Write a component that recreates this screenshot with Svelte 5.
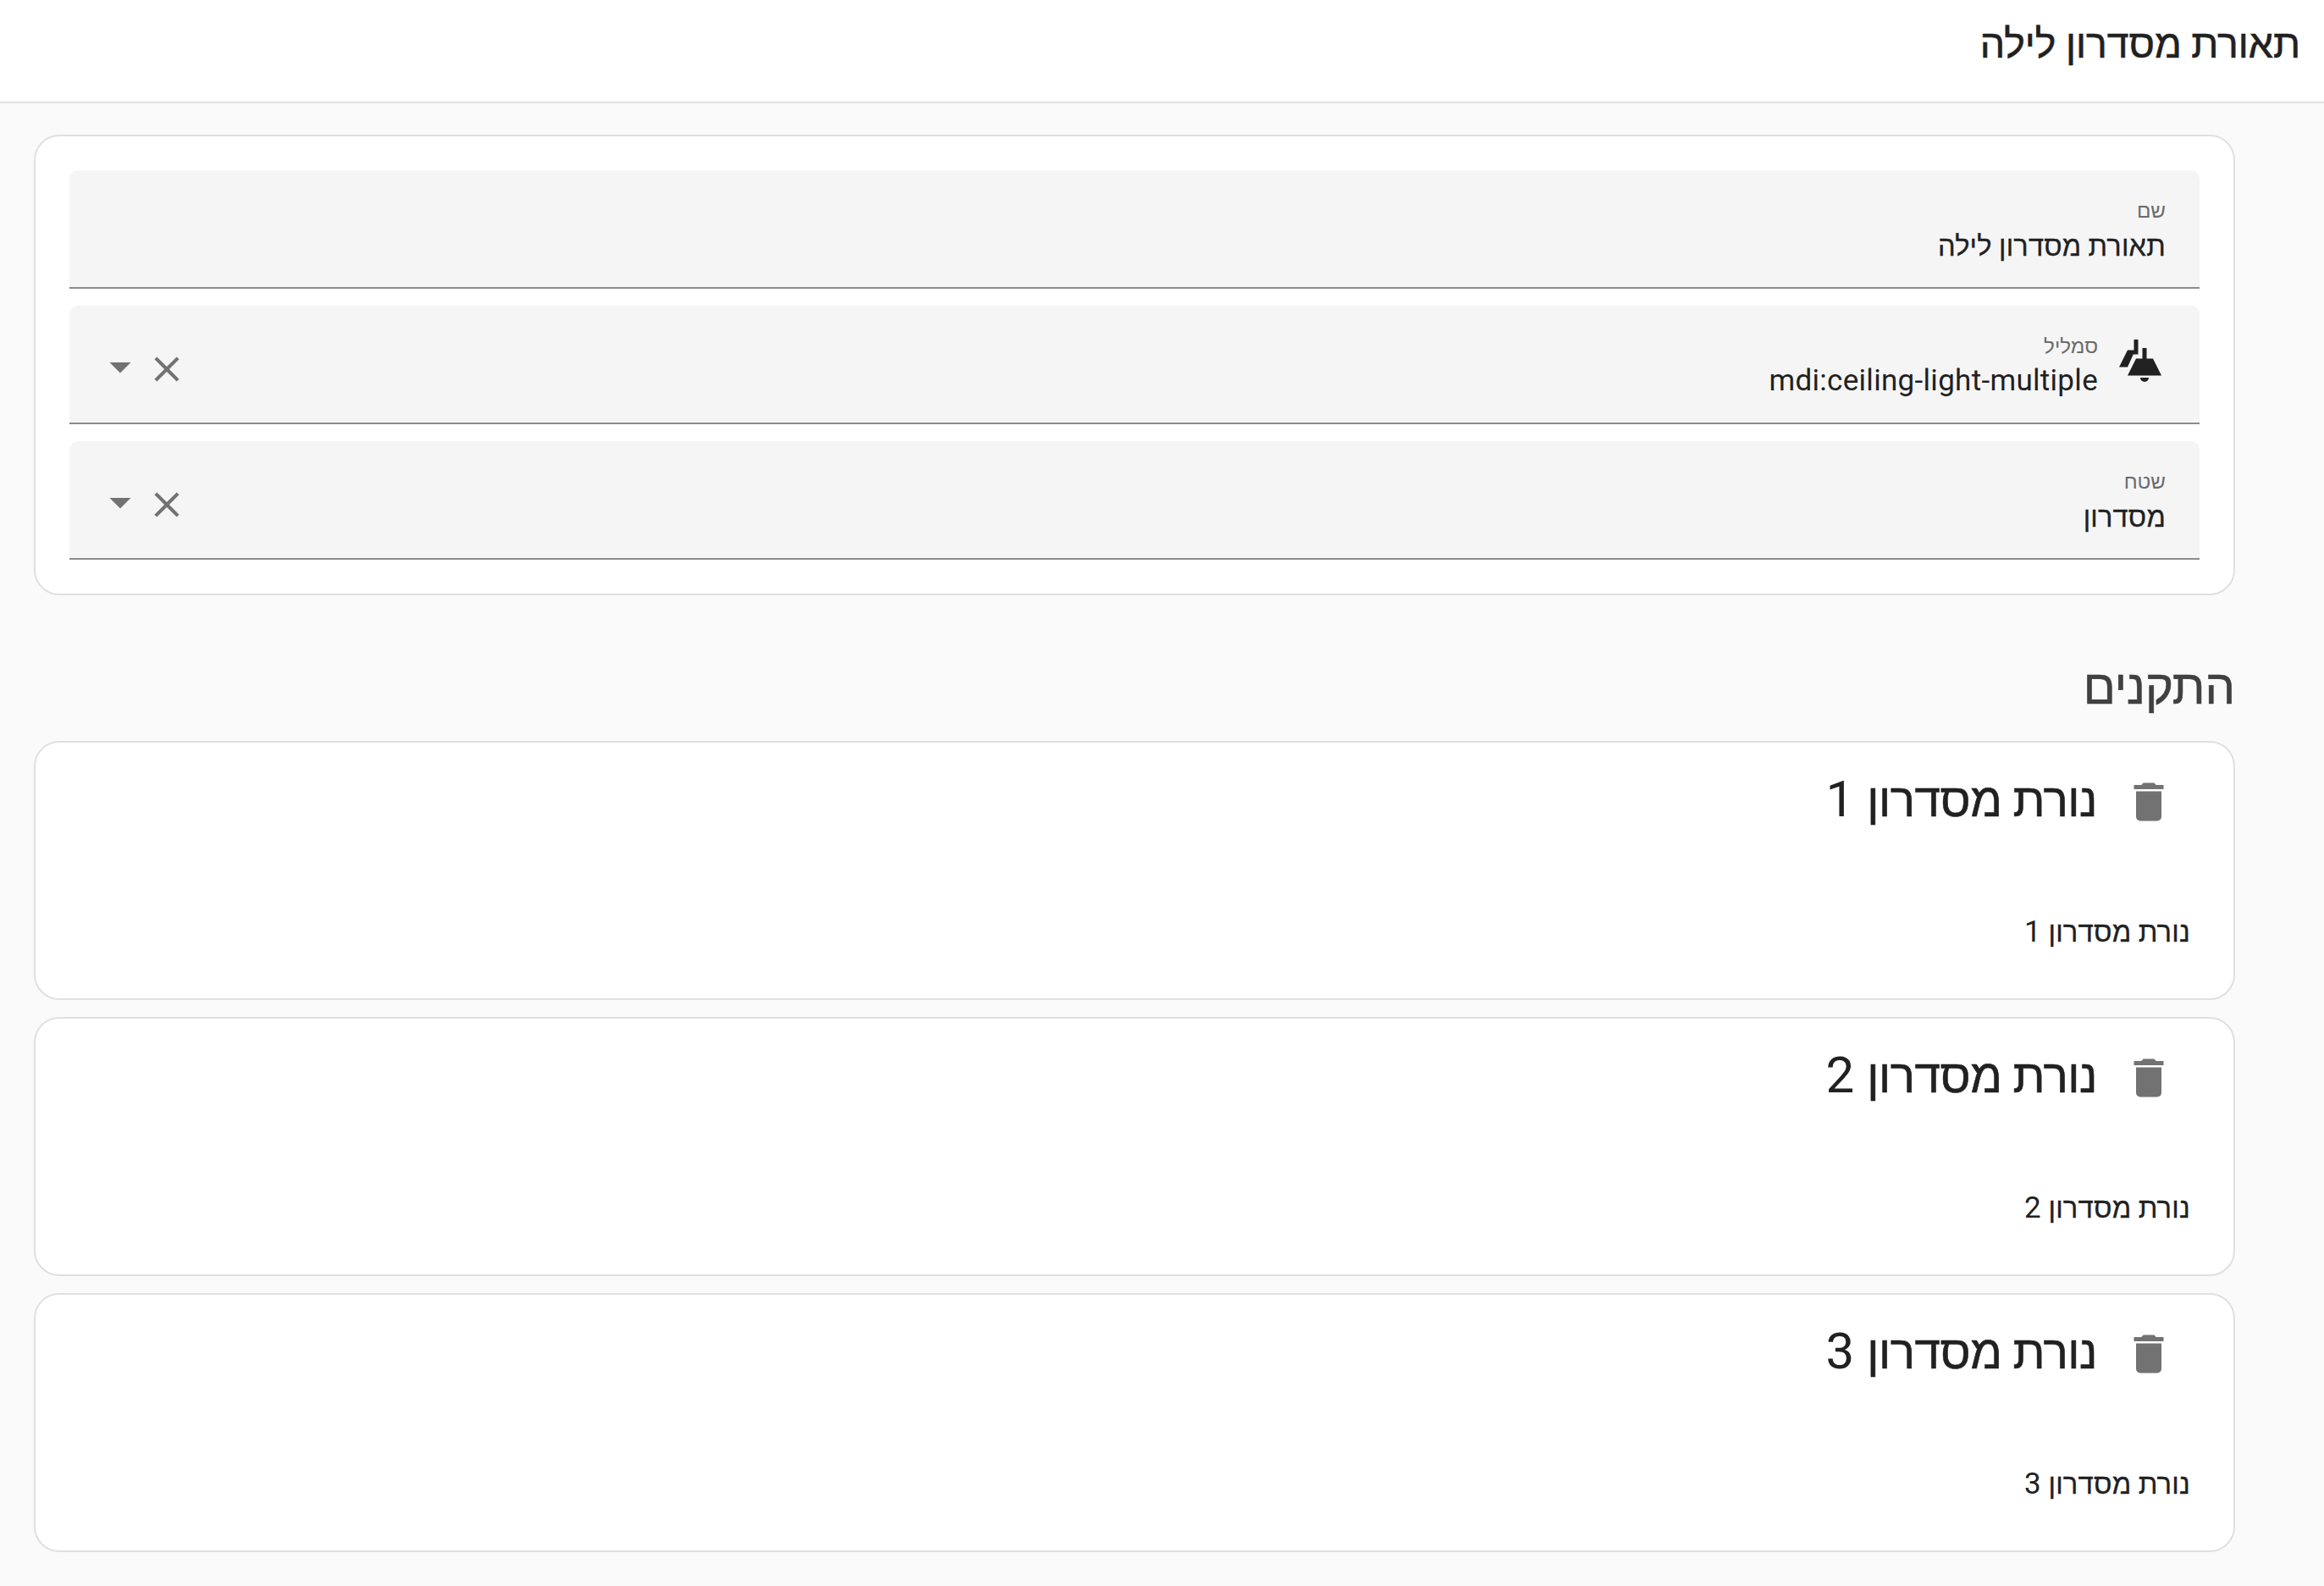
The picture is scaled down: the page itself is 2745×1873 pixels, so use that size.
<script>
    let title = $state('תאורת מסדרון לילה')
    let fields = $state([
        { label: 'שם', value: 'תאורת מסדרון לילה' },
        { label: 'סמליל', value: 'mdi:ceiling-light-multiple', icon: true, clearable: true },
        { label: 'שטח', value: 'מסדרון', clearable: true }
    ])
    let devices = $state([
        { id: 1, name: 'נורת מסדרון' },
        { id: 2, name: 'נורת מסדרון' },
        { id: 3, name: 'נורת מסדרון' }
    ])

    function clearField(field) {
        field.value = ''
    }

    function removeDevice(id) {
        devices = devices.filter(device => device.id !== id)
    }
</script>

<div class="page" dir="rtl">
    <header class="toolbar">
        <h1>{title}</h1>
    </header>

    <main class="content">
        <section class="card form">
            {#each fields as field}
                <div class="field">
                    {#if field.icon}
                        <svg class="lead" viewBox="0 0 24 24">
                            <path d="M9 2V7H6L2 15H6L8.7 9H11V2Z" />
                            <path d="M13 6V11H10L6 19H22L18 11H15V6ZM12 20A2 2 0 0 0 16 20Z" />
                        </svg>
                    {/if}
                    <div class="texts">
                        <span class="label">{field.label}</span>
                        <span class="value" class:latin={field.icon}><bdi>{field.value}</bdi></span>
                    </div>
                    {#if field.clearable}
                        <div class="actions">
                            <button type="button" aria-label="ניקוי" onclick={() => clearField(field)}>
                                <svg class="close" viewBox="0 0 24 24">
                                    <path d="M19,6.41L17.59,5L12,10.59L6.41,5L5,6.41L10.59,12L5,17.59L6.41,19L12,13.41L17.59,19L19,17.59L13.41,12L19,6.41Z" />
                                </svg>
                            </button>
                            <svg class="arrow" viewBox="0 0 24 24">
                                <path d="M7,10L12,15L17,10H7Z" />
                            </svg>
                        </div>
                    {/if}
                </div>
            {/each}
        </section>

        <h2>התקנים</h2>

        <div class="devices">
            {#each devices as device (device.id)}
                <section class="card device">
                    <div class="device-header">
                        <button type="button" aria-label="מחיקה" onclick={() => removeDevice(device.id)}>
                            <svg class="trash" viewBox="0 0 24 24">
                                <path d="M19,4H15.5L14.5,3H9.5L8.5,4H5V6H19M6,19A2,2 0 0,0 8,21H16A2,2 0 0,0 18,19V7H6V19Z" />
                            </svg>
                        </button>
                        <h3><span class="name">{device.name}</span> {device.id}</h3>
                    </div>
                    <p><span class="name">{device.name}</span> {device.id}</p>
                </section>
            {/each}
        </div>
    </main>
</div>

<style>
    :global(body) {
        margin: 0;
        background: #fafafa;
    }

    .page {
        min-height: 1873px;
        box-sizing: border-box;
        background: #fafafa;
        color: #212121;
        font-family: Roboto, "Liberation Sans", sans-serif;
    }

    h1,
    h2,
    h3,
    p {
        margin: 0;
        font-weight: 400;
        white-space: nowrap;
    }

    .toolbar {
        height: 98px;
        padding: 22px 28px 0 0;
        background: #fff;
        border-bottom: 2px solid #e0e0e0;
    }

    h1 {
        font-size: 46.4px;
        line-height: 60px;
        -webkit-text-stroke: 0.6px currentColor;
    }

    .content {
        padding: 37px 105px 0 40px;
    }

    .card {
        background: #fff;
        border: 2px solid #e0e0e0;
        border-radius: 30px;
        box-sizing: border-box;
    }

    .form {
        display: flex;
        flex-direction: column;
        gap: 20px;
        padding: 40px;
    }

    .field {
        display: flex;
        height: 140px;
        padding: 0 40px 0 30px;
        box-sizing: border-box;
        background: #f5f5f5;
        border-bottom: 2px solid #8c8c8c;
        border-radius: 10px 10px 0 0;
    }

    svg {
        display: block;
        flex: none;
        width: 60px;
        height: 60px;
        fill: #727272;
    }

    .lead {
        margin: 35px 0 0 20px;
        fill: #212121;
    }

    .texts {
        display: flex;
        flex-direction: column;
        flex: 1;
        padding-top: 32px;
    }

    .label {
        font-size: 24.2px;
        line-height: 32px;
        color: #6b6b6b;
    }

    .value {
        margin-top: 6px;
        font-size: 32.6px;
        line-height: 40px;
        letter-spacing: 0.2px;
        -webkit-text-stroke: 0.3px currentColor;
    }

    .value.latin {
        margin-top: 5px;
        font-size: 35px;
        letter-spacing: 0.3px;
        -webkit-text-stroke: 0;
    }

    .actions {
        display: flex;
        align-items: flex-start;
        padding-top: 42px;
    }

    button {
        all: unset;
        display: block;
        cursor: pointer;
    }

    .close {
        width: 50px;
        height: 50px;
        margin-top: 8px;
    }

    h2 {
        height: 172px;
        padding-top: 73px;
        box-sizing: border-box;
        font-size: 56px;
        line-height: 72px;
        color: #404040;
        -webkit-text-stroke: 0.6px currentColor;
    }

    .devices {
        display: flex;
        flex-direction: column;
        gap: 20px;
    }

    .device {
        height: 306px;
        padding: 31px 51px 0 0;
    }

    .device-header {
        display: flex;
        align-items: flex-start;
        gap: 31px;
    }

    .trash {
        margin: 9px 19px 0 0;
    }

    h3 {
        font-size: 60px;
        line-height: 72px;
    }

    .name {
        font-size: 32.8px;
        letter-spacing: 0.2px;
        -webkit-text-stroke: 0.3px currentColor;
    }

    h3 .name {
        font-size: 55px;
        letter-spacing: -0.5px;
        -webkit-text-stroke: 0.6px currentColor;
    }

    p {
        margin-top: 99px;
        font-size: 35px;
        line-height: 42px;
    }
</style>
